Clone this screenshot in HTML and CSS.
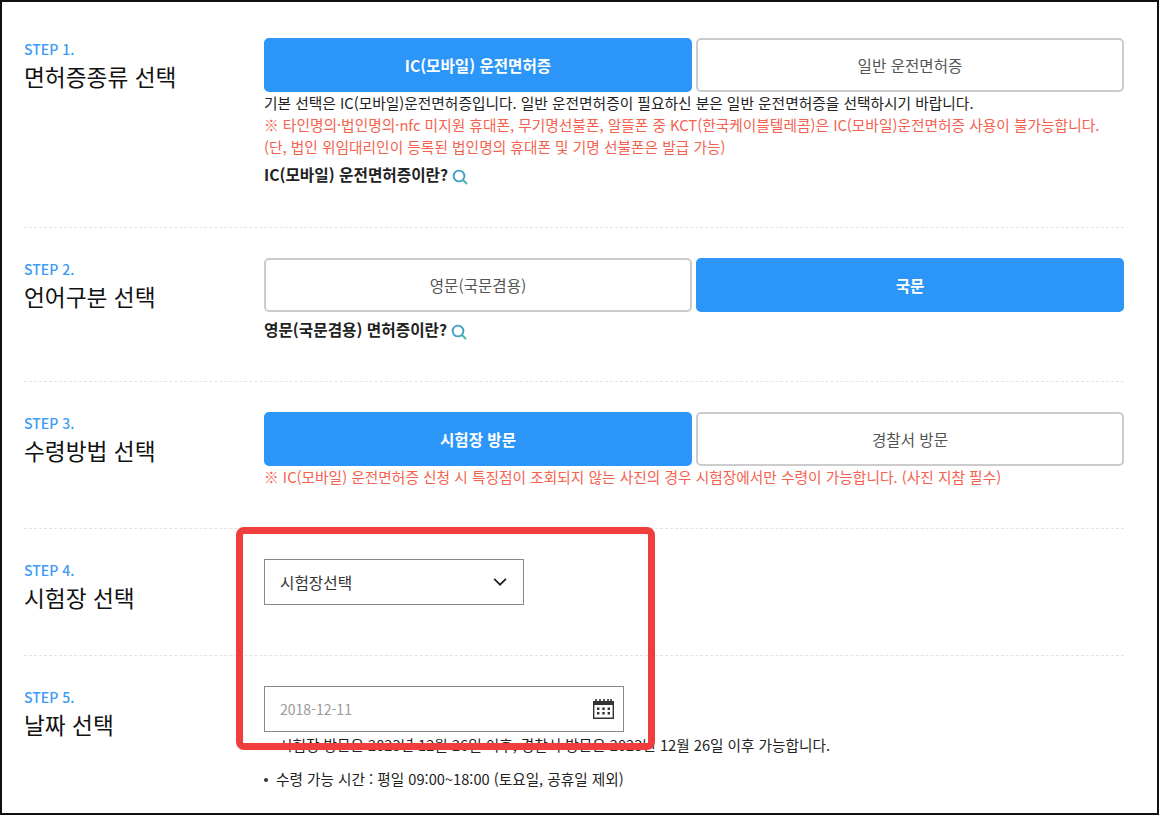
FILE: index.html
```html
<!DOCTYPE html>
<html lang="ko">
<head>
<meta charset="utf-8">
<title>운전면허증 신청</title>
<link rel="stylesheet" href="styles.css">
</head>
<body>
<div class="frame">
  <div class="form">
    <section class="row row-1">
      <div class="label"><p class="step">STEP 1.</p><h2 class="title">면허증종류 선택</h2></div>
      <div class="content">
        <div class="choices"><button class="choice on">IC(모바일) 운전면허증</button><button class="choice">일반 운전면허증</button></div>
        <p class="note">기본 선택은 IC(모바일)운전면허증입니다. 일반 운전면허증이 필요하신 분은 일반 운전면허증을 선택하시기 바랍니다.</p>
        <p class="note warn">※ 타인명의·법인명의·nfc 미지원 휴대폰, 무기명선불폰, 알뜰폰 중 KCT(한국케이블텔레콤)은 IC(모바일)운전면허증 사용이 불가능합니다.</p>
        <p class="note warn">(단, 법인 위임대리인이 등록된 법인명의 휴대폰 및 기명 선불폰은 발급 가능)</p>
        <p class="what what-1">IC(모바일) 운전면허증이란? <svg class="lens" viewBox="0 0 16 16" width="16" height="16"><circle cx="7" cy="7" r="5.4" fill="none" stroke="#3f9fc4" stroke-width="1.9"/><path d="M11 11l4 4" stroke="#4dbb9c" stroke-width="2.2" fill="none"/></svg></p>
      </div>
    </section>
    <section class="row row-2">
      <div class="label"><p class="step">STEP 2.</p><h2 class="title">언어구분 선택</h2></div>
      <div class="content">
        <div class="choices"><button class="choice">영문(국문겸용)</button><button class="choice on">국문</button></div>
        <p class="what what-2">영문(국문겸용) 면허증이란? <svg class="lens" viewBox="0 0 16 16" width="16" height="16"><circle cx="7" cy="7" r="5.4" fill="none" stroke="#3f9fc4" stroke-width="1.9"/><path d="M11 11l4 4" stroke="#4dbb9c" stroke-width="2.2" fill="none"/></svg></p>
      </div>
    </section>
    <section class="row row-3">
      <div class="label"><p class="step">STEP 3.</p><h2 class="title">수령방법 선택</h2></div>
      <div class="content">
        <div class="choices"><button class="choice on">시험장 방문</button><button class="choice">경찰서 방문</button></div>
        <p class="note warn">※ IC(모바일) 운전면허증 신청 시 특징점이 조회되지 않는 사진의 경우 시험장에서만 수령이 가능합니다. (사진 지참 필수)</p>
      </div>
    </section>
    <section class="row row-4">
      <div class="label"><p class="step">STEP 4.</p><h2 class="title">시험장 선택</h2></div>
      <div class="content">
        <div class="select"><span>시험장선택</span><svg viewBox="0 0 16 10" width="15" height="9"><path d="M1 1l6.5 6.5L14 1" fill="none" stroke="#222" stroke-width="2"/></svg></div>
      </div>
    </section>
    <section class="row row-5">
      <div class="label"><p class="step">STEP 5.</p><h2 class="title">날짜 선택</h2></div>
      <div class="content">
        <div class="date"><span>2018-12-11</span><svg viewBox="0 0 21 20" width="21" height="20"><path d="M3 0v3M7 0v3M11 0v3M15 0v3M18 0v3" stroke="#333" stroke-width="1.6"/><path d="M0 2h21v4H0z" fill="#333"/><path d="M.7 6v13.3h19.6V6" fill="none" stroke="#333" stroke-width="1.4"/><path d="M4 8.5h2.4v2.4H4zM9.3 8.5h2.4v2.4H9.3zM14.6 8.5H17v2.4h-2.4zM4 13h2.4v2.4H4zM9.3 13h2.4v2.4H9.3zM14.6 13H17v2.4h-2.4z" fill="#333"/></svg></div>
        <p class="note indent">시험장 방문은 2023년 12월 26일 이후, 경찰서 방문은 2023년 12월 26일 이후 가능합니다.</p>
        <p class="note bullet">수령 가능 시간 : 평일 09:00~18:00 (토요일, 공휴일 제외)</p>
      </div>
    </section>
  </div>
  <div class="highlight"></div>
</div>
</body>
</html>
```

FILE: styles.css
```css
* { box-sizing: border-box; }
html, body { margin: 0; padding: 0; background: #fff; }
body { font-family: "Noto Sans CJK KR", "Noto Sans", sans-serif; color: #222; }
p, h2 { margin: 0; }
.frame {
  position: relative;
  width: 1159px;
  height: 815px;
  overflow: hidden;
  border: 2px solid #111;
}
.form { width: 1100px; margin-left: 22px; }
.row { display: flex; border-bottom: 1px dashed #e4e4e4; padding-top: 36px; }
.row + .row { padding-top: 30px; }
.row-1 { height: 226px; }
.row-2 { height: 154px; }
.row-3 { height: 147px; }
.row-4 { height: 127px; }
.row-5 { border-bottom: 0; }
.label { width: 240px; flex: none; }
.step { font-size: 14px; line-height: 20px; font-weight: 500; color: #3d9bf5; margin-top: 1px; }
.title { font-size: 22.7px; line-height: 34px; font-weight: 400; color: #111; margin-top: 1px; }
.content { width: 860px; }
.choices { display: flex; gap: 4px; }
.choice {
  flex: 1 1 0;
  height: 54px;
  border: 2px solid #ccc;
  border-radius: 5px;
  background: #fff;
  color: #555;
  font: 400 15.6px "Noto Sans CJK KR", sans-serif;
}
.choice.on { background: #2b96f8; border-color: #2b96f8; color: #fff; font-weight: 700; }
.note { font-size: 14.73px; line-height: 22px; color: #222; }
.warn { color: #f4624f; }
.what { font-size: 15.7px; line-height: 22px; font-weight: 700; color: #222; display: flex; align-items: center; gap: 4px; }
.what-1 { margin-top: 6px; }
.what-2 { margin-top: 7px; }
.lens { flex: none; margin-top: 3px; }
.select, .date {
  display: flex;
  align-items: center;
  justify-content: space-between;
  height: 46px;
  border: 1px solid #888;
  background: #fff;
  padding-left: 15px;
}
.select { width: 260px; padding-right: 15px; color: #333; font-size: 15.7px; }
.date { width: 360px; padding-right: 9px; color: #999; font-size: 14px; }
.indent { padding-left: 15px; margin-top: 2px; font-size: 14.65px; }
.bullet { position: relative; padding-left: 12px; margin-top: 12px; font-size: 14.65px; }
.bullet::before {
  content: "";
  position: absolute;
  left: 0;
  top: 10px;
  width: 4px;
  height: 4px;
  border-radius: 50%;
  background: #333;
}
.highlight {
  position: absolute;
  left: 234px;
  top: 525px;
  width: 419px;
  height: 223px;
  border: 7px solid #f03e3e;
  border-radius: 8px;
}
```
